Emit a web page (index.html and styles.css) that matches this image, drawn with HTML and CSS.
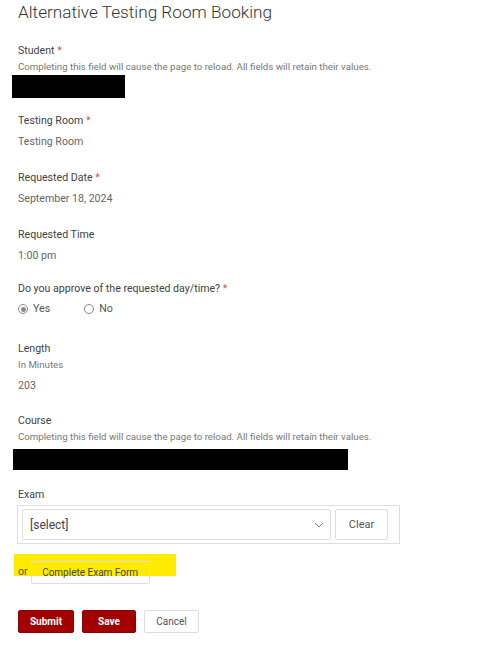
FILE: index.html
```html
<!DOCTYPE html>
<html lang="en">
<head>
    <meta charset="UTF-8">
    <meta name="viewport" content="width=device-width, initial-scale=1.0">
    <title>Alternative Testing Room Booking</title>
    <link rel="stylesheet" href="styles.css">
</head>
<body>
    <h1 class="page-title">Alternative Testing Room Booking</h1>

    <div class="field field-student">
        <div class="label">Student <span class="req">*</span></div>
        <div class="help">Completing this field will cause the page to reload. All fields will retain their values.</div>
        <div class="redacted redacted-student"></div>
    </div>

    <div class="field">
        <div class="label">Testing Room <span class="req">*</span></div>
        <div class="value">Testing Room</div>
    </div>

    <div class="field">
        <div class="label">Requested Date <span class="req">*</span></div>
        <div class="value">September 18, 2024</div>
    </div>

    <div class="field field-time">
        <div class="label">Requested Time</div>
        <div class="value">1:00 pm</div>
    </div>

    <div class="field field-approve">
        <div class="label">Do you approve of the requested day/time? <span class="req">*</span></div>
        <div class="radios">
            <label class="radio"><span class="dot checked"></span>Yes</label>
            <label class="radio"><span class="dot"></span>No</label>
        </div>
    </div>

    <div class="field field-length">
        <div class="label">Length</div>
        <div class="help">In Minutes</div>
        <div class="value">203</div>
    </div>

    <div class="field field-course">
        <div class="label">Course</div>
        <div class="help">Completing this field will cause the page to reload. All fields will retain their values.</div>
        <div class="redacted redacted-course"></div>
    </div>

    <div class="field field-exam">
        <div class="label">Exam</div>
        <div class="exam-box">
            <div class="select">
                <span>[select]</span>
                <svg class="chevron" width="10" height="6" viewBox="0 0 10 6"><path d="M1 1l4 4 4-4" fill="none" stroke="#777" stroke-width="1"/></svg>
            </div>
            <button class="btn btn-plain btn-clear">Clear</button>
        </div>
    </div>

    <div class="or-row">
        <span class="or">or</span>
        <button class="btn btn-plain btn-exam-form">Complete Exam Form</button>
    </div>

    <div class="actions">
        <button class="btn btn-primary btn-submit">Submit</button>
        <button class="btn btn-primary btn-save">Save</button>
        <button class="btn btn-plain btn-cancel">Cancel</button>
    </div>
</body>
</html>
```

FILE: styles.css
```css
body {
    margin: 0;
    padding: 0 18px;
    font-family: Roboto, "Liberation Sans", sans-serif;
    font-size: 10.6px;
    color: #444;
    background: #fff;
}

.page-title {
    margin: 0;
    font-size: 17.2px;
    line-height: 24px;
    font-weight: 300;
    color: #333;
}

.field {
    margin-bottom: 20px;
}

.field-student {
    margin-top: 19px;
    margin-bottom: 15px;
}

.label {
    line-height: 16px;
    color: #424242;
}

.req {
    color: #d9534f;
}

.help {
    font-size: 9.7px;
    line-height: 16px;
    color: #777;
}

.value {
    margin-top: 5px;
    line-height: 16px;
    color: #666;
}

.redacted {
    background: #000;
    height: 23px;
}

.redacted-student {
    width: 113px;
    margin-left: -6px;
}

.redacted-course {
    width: 335px;
    margin-left: -5px;
    height: 21px;
    margin-top: 4px;
}

.field-time {
    margin-bottom: 17px;
}

.field-approve {
    margin-bottom: 24px;
}

.radios {
    display: flex;
    gap: 34px;
    margin-top: 4px;
    line-height: 16px;
    color: #555;
}

.radio {
    display: flex;
    align-items: center;
    gap: 5px;
}

.dot {
    width: 10px;
    height: 10px;
    border: 1px solid #888;
    border-radius: 50%;
    box-sizing: border-box;
    position: relative;
}

.dot.checked::after {
    content: "";
    position: absolute;
    left: 1.5px;
    top: 1.5px;
    width: 5px;
    height: 5px;
    border-radius: 50%;
    background: #8a8a8a;
}

.field-length {
    margin-bottom: 19px;
}

.field-course {
    margin-bottom: 17px;
}

.field-exam {
    margin-bottom: 0;
}

.exam-box {
    display: flex;
    gap: 4px;
    width: 383px;
    box-sizing: border-box;
    margin-top: 2px;
    margin-left: -1px;
    padding: 3px 11px 3px 4px;
    border: 1px solid #ddd;
}

.select {
    flex: 1;
    display: flex;
    align-items: center;
    justify-content: space-between;
    height: 31px;
    box-sizing: border-box;
    padding: 0 6px 0 7px;
    border: 1px solid #ddd;
    border-radius: 2px;
    font-size: 12px;
    color: #444;
}

.btn {
    font-family: Roboto, "Liberation Sans", sans-serif;
    font-size: 10px;
    border-radius: 2px;
    cursor: pointer;
    padding: 0;
}

.btn-plain {
    background: #fff;
    border: 1px solid #ddd;
    color: #555;
}

.btn-clear {
    width: 53px;
    height: 31px;
    font-size: 11px;
}

.or-row {
    display: flex;
    align-items: flex-start;
    gap: 3px;
    width: 162px;
    height: 22px;
    box-sizing: border-box;
    margin-top: 10px;
    margin-left: -4px;
    padding-left: 4px;
    background: #ffea00;
    color: #555;
}

.or {
    margin-top: 10px;
    line-height: 16px;
}

.btn-exam-form {
    flex: none;
    width: 119px;
    height: 23px;
    margin-top: 7px;
    color: #444;
    background: transparent;
}

.actions {
    display: flex;
    gap: 8px;
    margin-top: 34px;
}

.btn-primary {
    height: 23px;
    background: #a30000;
    border: 1px solid #8e0000;
    color: #fff;
    font-weight: 700;
}

.btn-submit {
    width: 56px;
}

.btn-save {
    width: 54px;
}

.btn-cancel {
    width: 55px;
    height: 23px;
}
```
